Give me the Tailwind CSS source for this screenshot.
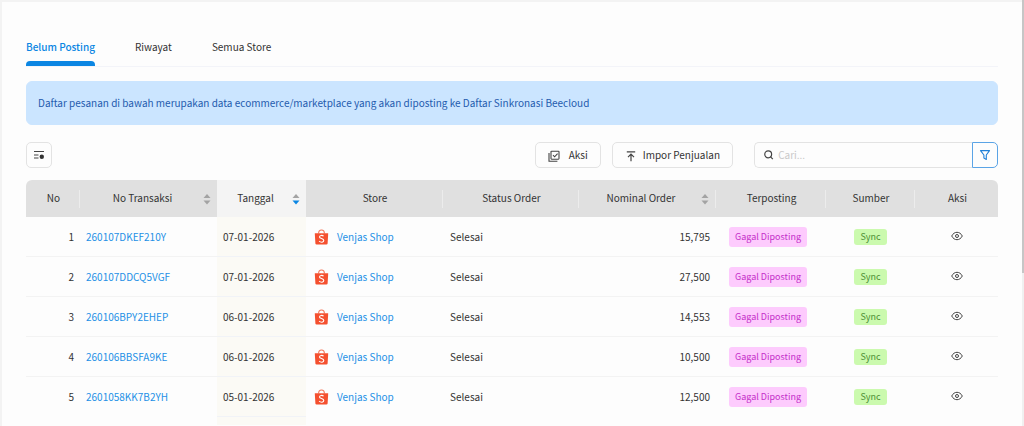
<!DOCTYPE html>
<html lang="id">
<head>
  <meta charset="UTF-8">
  <meta name="viewport" content="width=device-width, initial-scale=1.0">
  <title>Daftar Pesanan</title>
  <script src="https://cdn.jsdelivr.net/npm/@tailwindcss/browser@4"></script>
</head>
<body class="bg-[#fdfdfd] font-['Noto_Sans_CJK_SC',sans-serif] text-[10px] leading-4 text-[#333]">
  <!-- Page scrollbar -->
  <div class="fixed top-0 right-0 h-full w-[2px] bg-[#f0f0f0]">
    <div class="h-[64%] bg-[#c6c6c6]"></div>
  </div>

  <main class="min-h-screen border-t-2 border-l-2 border-[#f3f3f3] pt-[37px] pr-[26px] pl-6">
    <!-- Tabs -->
    <nav class="flex gap-10 border-b border-[#f3f4f9]">
      <a href="#" class="flex flex-col gap-[6px] font-medium text-[#0b86e3]">Belum Posting
        <span class="h-[5px] rounded-t bg-[#0b86e3]"></span>
      </a>
      <a href="#">Riwayat</a>
      <a href="#">Semua Store</a>
    </nav>

    <div class="mt-[14px] rounded-md border border-[#cbe5ff] bg-[#cbe5ff] px-[11px] py-[13px] text-[#1f5bae]">
      Daftar pesanan di bawah merupakan data ecommerce/marketplace yang akan diposting ke Daftar Sinkronasi Beecloud
    </div>

    <!-- Toolbar -->
    <div class="mt-[17px] flex items-center">
      <button type="button" aria-label="Atur kolom" class="flex h-[26px] w-[26px] items-center justify-center rounded-[5px] border border-[#e3e3e3]">
        <svg class="h-3 w-3" viewBox="0 0 12 12" fill="none" stroke="#444" stroke-width="1.2">
          <path d="M1 2.5h10M1 6h4.5M1 9h4.5" />
          <circle cx="8.8" cy="7.8" r="2.2" fill="#333" stroke="none" />
        </svg>
      </button>

      <div class="ml-auto flex items-center gap-[11px]">
        <button type="button" class="flex h-[26px] items-center gap-[9px] rounded-[5px] border border-[#e3e3e3] px-3">
          <svg class="mt-[2px] h-3 w-3" viewBox="0 0 12 12" fill="none" stroke="#444" stroke-width="1.1">
            <rect x="3" y="1.2" width="8" height="8" rx=".6" />
            <path d="M1 3v8.2h8.4M5 5.2l1.6 1.6 3-3.2" />
          </svg>
          Aksi
        </button>
        <button type="button" class="flex h-[26px] items-center gap-[6px] rounded-[5px] border border-[#e3e3e3] px-3">
          <svg class="mt-[2px] h-3 w-3" viewBox="0 0 12 12" fill="none" stroke="#444" stroke-width="1.2">
            <path d="M1.8 1.8h8.4M6 11.2V4.4M3 7.2l3-3 3 3" />
          </svg>
          Impor Penjualan
        </button>
      </div>

      <div class="ml-[21px] flex h-[26px]">
        <label class="flex w-[218px] items-center gap-1 rounded-l-[5px] border border-r-0 border-[#e3e3e3] pl-2">
          <svg class="h-3 w-3" viewBox="0 0 12 12" fill="none" stroke="#444" stroke-width="1.3">
            <circle cx="5.6" cy="5.3" r="3.7" />
            <path d="M8.2 8l2.4 2.4" />
          </svg>
          <input type="text" aria-label="Cari" placeholder="Cari..." class="w-full outline-none placeholder:text-[#c9c9c9]">
        </label>
        <button type="button" aria-label="Filter" class="flex w-[26px] items-center justify-center rounded-r-[5px] border border-[#5ba4e6]">
          <svg class="h-3 w-3" viewBox="0 0 12 12" fill="none" stroke="#1f80d8" stroke-width="1.1" stroke-linejoin="round">
            <path d="M1.5 1.6h9L7.3 6v4.4L4.9 9V6z" />
          </svg>
        </button>
      </div>
    </div>

    <!-- Orders -->
    <table class="mt-3 w-full table-fixed border-separate border-spacing-0">
      <colgroup>
        <col class="w-[54px]">
        <col class="w-[137px]">
        <col class="w-[89px]">
        <col class="w-[137px]">
        <col class="w-[136px]">
        <col class="w-[137px]">
        <col class="w-[110px]">
        <col class="w-[89px]">
        <col class="w-[83px]">
      </colgroup>
      <thead>
        <tr id="head"></tr>
      </thead>
      <tbody id="orders"></tbody>
    </table>
  </main>

  <script>
    const columns = [
      { label: 'No', divider: true },
      { label: 'No Transaksi', sort: 'none' },
      { label: 'Tanggal', sort: 'desc' },
      { label: 'Store', divider: true },
      { label: 'Status Order', divider: true },
      { label: 'Nominal Order', sort: 'none', divider: true },
      { label: 'Terposting', divider: true },
      { label: 'Sumber', divider: true },
      { label: 'Aksi' },
    ];

    const orders = [
      ['260107DKEF210Y', '07-01-2026', '15,795'],
      ['260107DDCQ5VGF', '07-01-2026', '27,500'],
      ['260106BPY2EHEP', '06-01-2026', '14,553'],
      ['260106BBSFA9KE', '06-01-2026', '10,500'],
      ['2601058KK7B2YH', '05-01-2026', '12,500'],
    ];

    document.getElementById('head').innerHTML = columns.map(col => {
      const active = col.sort === 'desc';
      const arrows = col.sort ? `
        <svg class="h-3 w-2 shrink-0" viewBox="0 0 8 12">
          <path d="M4 1l3.5 4h-7z" fill="#a3a3a3" />
          <path d="M4 11.5l3.5-4h-7z" fill="${active ? '#0b86e3' : '#a3a3a3'}" />
        </svg>` : '';
      return `
        <th class="h-[37px] p-0 font-normal first:rounded-tl-md last:rounded-tr-md ${active ? 'bg-[#f4f4f4]' : 'bg-[#e0e0e0]'}">
          <div class="flex h-[18px] items-center ${col.sort ? 'pr-[6px]' : ''} ${col.divider ? 'border-r border-[#ececec]' : ''}">
            <span class="flex-1 pb-[2px] pl-[2px]">${col.label}</span>${arrows}
          </div>
        </th>`;
    }).join('');

    document.getElementById('orders').innerHTML = orders.map(([code, date, total], i) => `
      <tr class="h-10 *:border-b *:border-[#f3f3f3] ${i === orders.length - 1 ? '*:border-transparent' : ''}">
        <td class="pr-[6px] text-right">${i + 1}</td>
        <td class="pl-[6px]"><a href="#" class="text-[#2490e6]">${code}</a></td>
        <td class="border-[#f1f3f7]! bg-[#fbfaf5] pl-[6px]">${date}</td>
        <td class="pl-2">
          <a href="#" class="flex items-center gap-2 text-[#2490e6]">
            <svg class="h-4 w-[15px]" viewBox="0 0 15 16" fill="none">
              <path d="M4.6 4.5C4.6 2.3 5.8 1 7.5 1s2.9 1.3 2.9 3.5" stroke="#f2785c" stroke-width="1.1" />
              <path d="M.8 4.2h13.4l-.6 10.2q-.1 1.1-1.2 1.1H2.6q-1.1 0-1.2-1.1z" fill="#f4502f" />
              <path d="M9.6 7.2C8.3 6 5.5 6.1 5.5 7.9c0 2 4.3 1.4 4.3 3.6 0 2-3 2.2-4.7.7" stroke="#fff" stroke-width="1.1" />
            </svg>
            Venjas Shop
          </a>
        </td>
        <td class="pl-[7px]">Selesai</td>
        <td class="pr-[6px] text-right">${total}</td>
        <td class="pl-[13px]"><span class="inline-block rounded-[3px] bg-[#fdcbfd] px-[6px] py-[2px] text-[9px] text-[#c42fc9]">Gagal Diposting</span></td>
        <td class="text-center"><span class="inline-block rounded-[3px] bg-[#cbfaae] px-[6px] text-[9px] text-[#4f9136]">Sync</span></td>
        <td>
          <button type="button" aria-label="Lihat" class="mx-auto mb-[2px] block">
            <svg class="h-3 w-3" viewBox="0 0 12 12" fill="none" stroke="#444" stroke-width="1">
              <path d="M.7 6C2 3.5 3.9 2.3 6 2.3S10 3.5 11.3 6C10 8.5 8.1 9.7 6 9.7S2 8.5.7 6z" />
              <circle cx="6" cy="6" r="1.5" />
            </svg>
          </button>
        </td>
      </tr>`).join('') + `
      <tr class="h-2"><td></td><td></td><td class="bg-[#fbfaf5]"></td><td colspan="6"></td></tr>`;
  </script>
</body>
</html>
